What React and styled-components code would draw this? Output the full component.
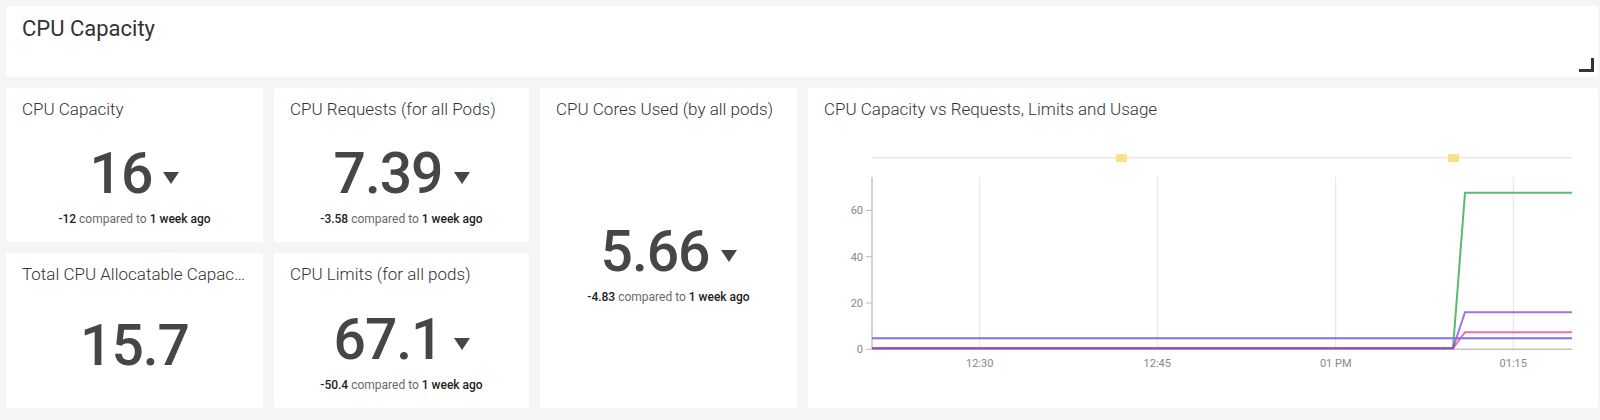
import React from "react";
import styled, { createGlobalStyle } from "styled-components";

const Global = createGlobalStyle`
  html, body { margin: 0; padding: 0; background: #f4f6f5; }
  body { font-family: Roboto, "Liberation Sans", sans-serif; }
`;

const Page = styled.div`
  display: grid;
  grid-template-columns: 257px 255px 257px 1fr;
  grid-template-rows: 71px 154px 155px;
  gap: 11px;
  padding: 6px 2px 12px 6px;
  height: 420px;
  box-sizing: border-box;
  background: #f4f6f5;
`;

const Card = styled.div`
  background: #fff;
  border-radius: 2px;
  position: relative;
  display: flex;
  flex-direction: column;
  min-width: 0;
  overflow: hidden;
  grid-column: ${(p) => p.$col || "auto"};
  grid-row: ${(p) => p.$row || "auto"};
`;

const HeaderTitle = styled.h1`
  margin: 0;
  padding: 9px 16px 0;
  font-size: 22px;
  line-height: 28px;
  font-weight: 400;
  color: #333;
`;

const ResizeHandle = styled.div`
  position: absolute;
  right: 4px;
  bottom: 5px;
  width: 15px;
  height: 14px;
  border-right: 3px solid #333;
  border-bottom: 3px solid #333;
  box-sizing: border-box;
`;

const Title = styled.div`
  padding: 11px 16px 0;
  font-size: 17px;
  line-height: 20px;
  font-weight: 300;
  color: #333;
  white-space: nowrap;
  overflow: hidden;
  text-overflow: ellipsis;
`;

const Body = styled.div`
  flex: 1;
  display: flex;
  flex-direction: column;
  align-items: center;
  justify-content: center;
  padding-top: ${(p) => p.$shift || 0}px;
`;

const ValueRow = styled.div`
  display: flex;
  align-items: center;
  gap: 11px;
`;

const Value = styled.div`
  font-size: 57px;
  line-height: 60px;
  font-weight: 500;
  color: #464646;
  letter-spacing: -1px;
`;

const Arrow = styled.svg`
  width: 16px;
  height: 12px;
  margin-top: 8px;
  fill: #464646;
`;

const Compare = styled.div`
  margin-top: 7px;
  font-size: 12px;
  line-height: 16px;
  color: #6a6a6a;
  font-weight: 400;
  b {
    font-weight: 500;
    color: #222;
  }
`;

const ChartSvg = styled.svg`
  display: block;
  width: 790px;
  height: 289px;
  font-family: Roboto, "Liberation Sans", sans-serif;
`;

const stats = [
  { title: "CPU Capacity", value: "16", delta: "-12", col: "1", row: "2", shift: 10 },
  { title: "CPU Requests (for all Pods)", value: "7.39", delta: "-3.58", col: "2", row: "2", shift: 10 },
  { title: "CPU Cores Used (by all pods)", value: "5.66", delta: "-4.83", col: "3", row: "2 / 4", shift: 0 },
  { title: "Total CPU Allocatable Capacity", value: "15.7", col: "1", row: "3", shift: 0 },
  { title: "CPU Limits (for all pods)", value: "67.1", delta: "-50.4", col: "2", row: "3", shift: 10 },
];

function StatCard({ s }) {
  return (
    <Card $col={s.col} $row={s.row}>
      <Title>{s.title}</Title>
      <Body $shift={s.shift}>
        <ValueRow>
          <Value>{s.value}</Value>
          {s.delta && (
            <Arrow viewBox="0 0 16 12">
              <polygon points="0,0 16,0 8,12" />
            </Arrow>
          )}
        </ValueRow>
        {s.delta && (
          <Compare>
            <b>{s.delta}</b> compared to <b>1 week ago</b>
          </Compare>
        )}
      </Body>
    </Card>
  );
}

const X0 = 64;
const X1 = 764;
const Y0 = 230.3;
const yv = (v) => Y0 - v * 2.315;
const gridX = [171.7, 349.3, 527.7, 705.3];
const xLabels = ["12:30", "12:45", "01 PM", "01:15"];
const yTicks = [0, 20, 40, 60];
const SX = 645;
const EX = 657;

function Chart() {
  return (
    <ChartSvg viewBox="0 0 790 289">
      <line x1={X0} x2={X1} y1={38.7} y2={38.7} stroke="#ebebeb" strokeWidth="2" />
      <rect x="308" y="35" width="11" height="8" fill="#fae08a" />
      <rect x="640" y="35" width="11" height="8" fill="#fae08a" />
      {gridX.map((x) => (
        <line key={x} x1={x} x2={x} y1={58} y2={Y0} stroke="#e4e4e4" strokeWidth="1" />
      ))}
      <line x1={X0} x2={X0} y1={58} y2={Y0} stroke="#aaa" strokeWidth="1" />
      <line x1={X0} x2={X1} y1={Y0} y2={Y0} stroke="#c4c4c4" strokeWidth="1.5" />
      {yTicks.map((t) => (
        <g key={t}>
          <line x1={X0 - 6} x2={X0} y1={yv(t)} y2={yv(t)} stroke="#bbb" strokeWidth="1" />
          <text x={X0 - 9} y={yv(t) + 4} textAnchor="end" fontSize="11" fill="#888">
            {t}
          </text>
        </g>
      ))}
      {gridX.map((x, i) => (
        <text key={i} x={x} y={247.7} textAnchor="middle" fontSize="11" fill="#888">
          {xLabels[i]}
        </text>
      ))}
      <polyline
        points={`${X0},${Y0 - 1} ${SX},${Y0 - 1} ${EX},${yv(67.6)} ${X1},${yv(67.6)}`}
        fill="none"
        stroke="#5cba6e"
        strokeWidth="2"
      />
      <polyline
        points={`${X0},${Y0 - 1} ${SX},${Y0 - 1} ${EX},${yv(7.4)} ${X1},${yv(7.4)}`}
        fill="none"
        stroke="#ee4a8e"
        strokeWidth="2"
        strokeOpacity="0.8"
      />
      <polyline
        points={`${X0},${Y0 - 1} ${SX},${Y0 - 1} ${EX},${yv(16)} ${X1},${yv(16)}`}
        fill="none"
        stroke="#7e44de"
        strokeWidth="2"
        strokeOpacity="0.75"
      />
      <polyline
        points={`${X0},${yv(4.8)} ${X1},${yv(4.8)}`}
        fill="none"
        stroke="#7f70f0"
        strokeWidth="2"
      />
    </ChartSvg>
  );
}

export default function App() {
  return (
    <>
      <Global />
      <Page>
        <Card $col="1 / -1" $row="1">
          <HeaderTitle>CPU Capacity</HeaderTitle>
          <ResizeHandle />
        </Card>
        {stats.map((s) => (
          <StatCard key={s.title} s={s} />
        ))}
        <Card $col="4" $row="2 / 4">
          <Title>CPU Capacity vs Requests, Limits and Usage</Title>
          <Chart />
        </Card>
      </Page>
    </>
  );
}
